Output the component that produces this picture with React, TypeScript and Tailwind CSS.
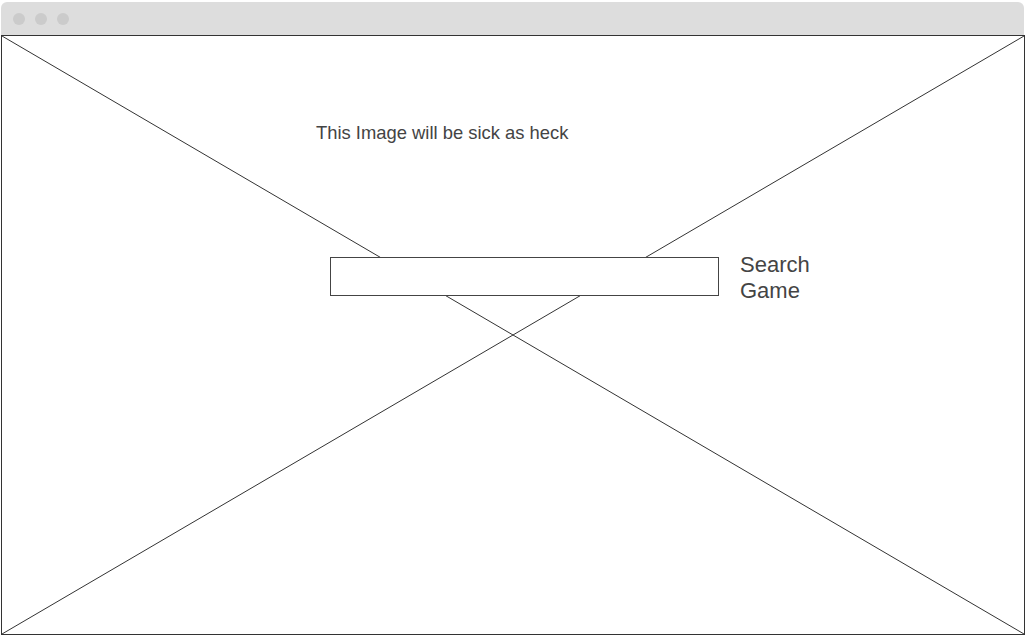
export default function App() {
  return (
    <div className="w-[1025px] h-[636px] bg-white pt-[2px] font-['Liberation_Sans',Arial,sans-serif] text-[#444]">
      {/* window chrome */}
      <div className="ml-[1px] w-[1023px] h-[33px] rounded-t-[6px] bg-[#dddddd] flex items-center gap-[10px] pl-[12px]">
        <span className="w-[12px] h-[12px] rounded-full bg-[#cbcbcb]" />
        <span className="w-[12px] h-[12px] rounded-full bg-[#cbcbcb]" />
        <span className="w-[12px] h-[12px] rounded-full bg-[#cbcbcb]" />
      </div>

      {/* image placeholder */}
      <div className="relative ml-[1px] w-[1024px] h-[600px] border border-[#333]">
        <svg className="absolute inset-0 w-full h-full" viewBox="0 0 1022 598" preserveAspectRatio="none">
          <line x1="0" y1="0" x2="1022" y2="598" stroke="#333" strokeWidth="1" />
          <line x1="1022" y1="0" x2="0" y2="598" stroke="#333" strokeWidth="1" />
        </svg>

        <div className="relative flex flex-col">
          <p className="ml-[314px] mt-[86px] text-[18.4px] leading-[22px]">This Image will be sick as heck</p>
          <div className="flex items-start mt-[113px] ml-[328px]">
            <input className="w-[389px] h-[39px] border border-[#444] bg-white outline-none" />
            <div className="ml-[21px] -mt-[5px] text-[22px] leading-[26px]">
              Search
              <br />
              Game
            </div>
          </div>
        </div>
      </div>
    </div>
  )
}
